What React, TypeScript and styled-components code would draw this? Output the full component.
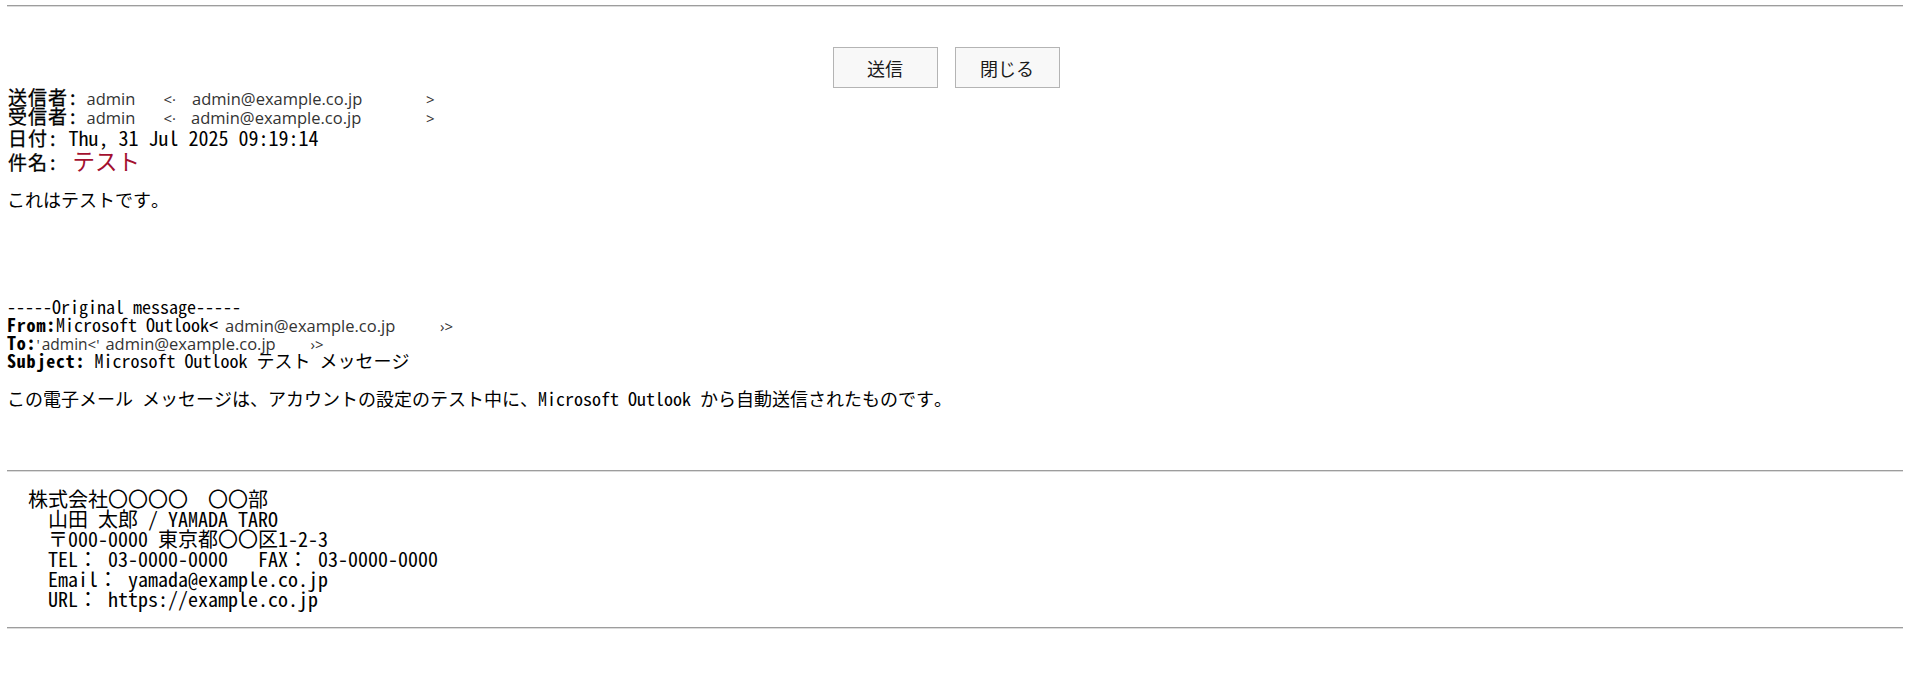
import React from "react";
import styled, { createGlobalStyle } from "styled-components";

const Global = createGlobalStyle`
  html, body { margin: 0; padding: 0; background: #ffffff; }
  body { color: #000; font-family: "Noto Sans Mono CJK JP", "Noto Sans CJK JP", "Liberation Mono", monospace; }
`;

const MONO = `"Noto Sans Mono CJK JP", "Noto Sans CJK JP", "Liberation Mono", monospace`;
const SANS = `"Open Sans", "Noto Sans", "Liberation Sans", sans-serif`;
const JSANS = `"Noto Sans CJK JP", "Noto Sans", sans-serif`;

const Page = styled.div`
  padding: 5px 11px 40px 7px;
`;

const Rule = styled.hr<{ $top?: number; $bottom?: number }>`
  margin: ${(p) => p.$top ?? 0}px 0 ${(p) => p.$bottom ?? 0}px 0;
  border: none;
  border-top: 1px solid #9d9d9d;
  border-bottom: 1px solid #dcdcdc;
  height: 0;
`;

const ButtonBar = styled.div`
  display: flex;
  justify-content: center;
  gap: 17px;
  margin-top: 40px;
  padding-right: 18px;
`;

const Button = styled.button`
  width: 105px;
  height: 41px;
  background: #f8f8f8;
  border: 1px solid #b4b4b4;
  border-radius: 0;
  font-family: ${JSANS};
  font-size: 18px;
  color: #1a1a1a;
  padding: 0;
`;

const Header = styled.div`
  display: flex;
  flex-direction: column;
  padding-left: 1px;
`;

const HeaderRow = styled.div<{ $h: number }>`
  display: flex;
  align-items: baseline;
  height: ${(p) => p.$h}px;
  line-height: 18px;
  white-space: pre;
`;

const Label = styled.span`
  font-family: ${MONO};
  font-size: 19px;
  letter-spacing: 1px;
  line-height: 18px;
  -webkit-text-stroke: 0.3px #000;
`;

const Plain = styled.span`
  font-family: ${MONO};
  font-size: 20px;
  line-height: 18px;
  margin-left: 10px;
`;

const Name = styled.span<{ $w?: number; $ml?: number; $fs?: number }>`
  display: inline-block;
  font-family: ${SANS};
  font-size: ${(p) => p.$fs ?? 16.5}px;
  line-height: 16px;
  color: #333333;
  margin-left: ${(p) => p.$ml ?? 8}px;
  width: ${(p) => (p.$w ? `${p.$w}px` : "auto")};
`;

const Bracket = styled.span`
  font-family: ${SANS};
  font-size: 15px;
  line-height: 16px;
  color: #333333;
`;

const Email = styled.span<{ $w: number; $ml: number }>`
  display: inline-block;
  font-family: ${SANS};
  font-size: 16.5px;
  line-height: 16px;
  color: #333333;
  margin-left: ${(p) => p.$ml}px;
  width: ${(p) => p.$w}px;
`;

const SubjectText = styled.span`
  font-family: ${JSANS};
  font-size: 22.5px;
  line-height: 20px;
  color: #a3102f;
  margin-left: 14px;
`;

const Body = styled.div`
  font-family: ${MONO};
  font-size: 18px;
  line-height: 18px;
  white-space: pre;
`;

const Line = styled.div<{ $mt?: number }>`
  display: flex;
  align-items: baseline;
  height: 18px;
  margin-top: ${(p) => p.$mt ?? 0}px;
`;

const Bold = styled.span`
  font-family: ${MONO};
  font-size: 18px;
  line-height: 18px;
  letter-spacing: 0.8px;
  font-weight: 700;
`;

const Signature = styled.div`
  font-family: ${MONO};
  font-size: 20px;
  line-height: 20px;
  white-space: pre;
  margin: 17px 0 18px 1px;
`;

export default function App() {
  return (
    <>
      <Global />
      <Page>
        <Rule />
        <ButtonBar>
          <Button>送信</Button>
          <Button>閉じる</Button>
        </ButtonBar>
        <Header>
          <HeaderRow $h={19}>
            <Label>送信者:</Label>
            <Name $w={77}>admin</Name>
            <Bracket>&lt;·</Bracket>
            <Email $w={234} $ml={16}>admin@example.co.jp</Email>
            <Bracket>&gt;</Bracket>
          </HeaderRow>
          <HeaderRow $h={22}>
            <Label>受信者:</Label>
            <Name $w={77}>admin</Name>
            <Bracket>&lt;·</Bracket>
            <Email $w={235} $ml={15}>admin@example.co.jp</Email>
            <Bracket>&gt;</Bracket>
          </HeaderRow>
          <HeaderRow $h={21}>
            <Label>日付:</Label>
            <Plain>Thu, 31 Jul 2025 09:19:14</Plain>
          </HeaderRow>
          <HeaderRow $h={22}>
            <Label>件名:</Label>
            <SubjectText>テスト</SubjectText>
          </HeaderRow>
        </Header>
        <Body>
          <Line $mt={18}>これはテストです。</Line>
          <Line $mt={89}>-----Original message-----</Line>
          <Line>
            <Bold>From:</Bold>Microsoft Outlook&lt;
            <Email $w={215} $ml={7}>admin@example.co.jp</Email>
            <Bracket>›&gt;</Bracket>
          </Line>
          <Line>
            <Bold>To:</Bold>
            <Bracket>'</Bracket>
            <Name $ml={2} $fs={15.5}>admin</Name>
            <Bracket>&lt;'</Bracket>
            <Email $w={205} $ml={6}>admin@example.co.jp</Email>
            <Bracket>›&gt;</Bracket>
          </Line>
          <Line>
            <Bold>Subject:</Bold> Microsoft Outlook テスト メッセージ
          </Line>
          <Line $mt={20}>この電子メール メッセージは、アカウントの設定のテスト中に、Microsoft Outlook から自動送信されたものです。</Line>
        </Body>
        <Rule $top={63} />
        <Signature>
          {"　株式会社〇〇〇〇　〇〇部\n　　山田 太郎 / YAMADA TARO\n　　〒000-0000 東京都〇〇区1-2-3\n　　TEL： 03-0000-0000　 FAX： 03-0000-0000\n　　Email： yamada@example.co.jp\n　　URL： https://example.co.jp"}
        </Signature>
        <Rule />
      </Page>
    </>
  );
}
